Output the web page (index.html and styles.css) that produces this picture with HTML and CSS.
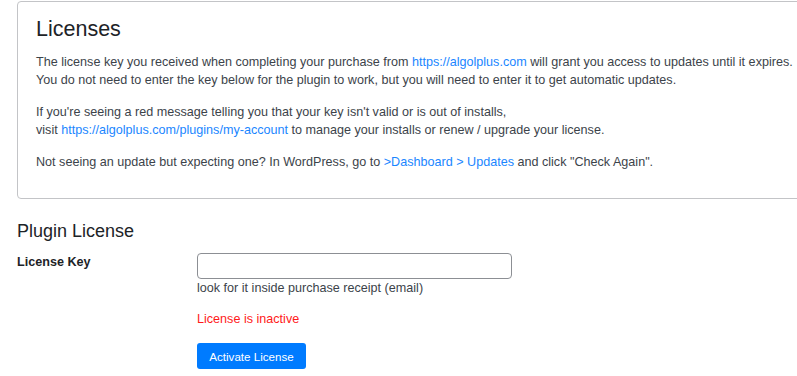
FILE: index.html
```html
<!DOCTYPE html>
<html lang="en">
<head>
  <meta charset="UTF-8">
  <title>Licenses</title>
  <link rel="stylesheet" href="styles.css">
</head>
<body>
  <div class="wrap">
    <div class="license-box">
      <h1>Licenses</h1>
      <p>The license key you received when completing your purchase from <a href="#">https://algolplus.com</a> will grant you access to updates until it expires.<br>
      You do not need to enter the key below for the plugin to work, but you will need to enter it to get automatic updates.</p>
      <p>If you're seeing a red message telling you that your key isn't valid or is out of installs,<br>
      visit <a href="#">https://algolplus.com/plugins/my-account</a> to manage your installs or renew / upgrade your license.</p>
      <p>Not seeing an update but expecting one? In WordPress, go to <a href="#">&gt;Dashboard &gt; Updates</a> and click "Check Again".</p>
    </div>

    <h2>Plugin License</h2>
    <form class="form-table">
      <div class="form-row">
        <label class="row-label" for="licenseKey">License Key</label>
        <div class="row-field">
          <input type="text" id="licenseKey" name="licenseKey">
          <div class="description">look for it inside purchase receipt (email)</div>
          <p class="license-status">License is inactive</p>
          <button type="button" class="btn-activate">Activate License</button>
        </div>
      </div>
    </form>
  </div>
</body>
</html>
```

FILE: styles.css
```css
body {
  margin: 0;
  font-family: "Liberation Sans", Arial, sans-serif;
  font-size: 12.6px;
  color: #3c434a;
  background: #fff;
  overflow: hidden;
}
.wrap {
  padding-left: 17px;
}
a {
  color: #1a86ff;
  text-decoration: none;
}
.license-box {
  width: 800px;
  margin-top: 1px;
  padding: 0 18px 13px;
  border: 1px solid #c3c4c7;
  border-radius: 4px;
}
.license-box h1 {
  font-size: 21.5px;
  font-weight: 400;
  color: #1d2327;
  margin: 0;
  padding: 14px 0 9px;
  line-height: 1.3;
}
.license-box p {
  margin: 0 0 14px;
  line-height: 18px;
}
h2 {
  font-size: 18px;
  font-weight: 400;
  color: #1d2327;
  margin: 21px 0 10px;
  line-height: 1.3;
}
.form-row {
  display: flex;
}
.row-label {
  width: 180px;
  font-weight: bold;
  color: #1d2327;
  line-height: 18px;
}
.row-field input {
  display: block;
  width: 315px;
  height: 26px;
  box-sizing: border-box;
  border: 1px solid #8c8f94;
  border-radius: 4px;
  margin: 0;
  padding: 0 8px;
}
.description {
  line-height: 18px;
}
.license-status {
  color: #ff1a1a;
  margin: 13px 0 15px;
  line-height: 18px;
}
.btn-activate {
  background-color: #007bff;
  color: #fff;
  border: none;
  border-radius: 3px;
  font-family: "Liberation Sans", Arial, sans-serif;
  font-size: 11.6px;
  width: 109px;
  height: 26px;
  padding: 0;
  cursor: pointer;
}
```
